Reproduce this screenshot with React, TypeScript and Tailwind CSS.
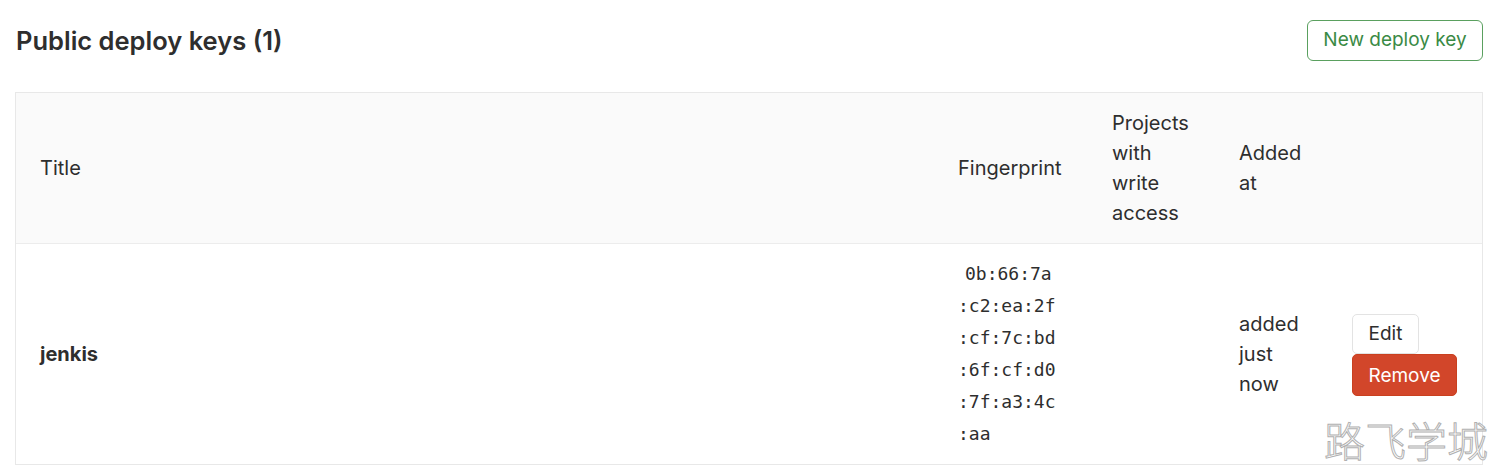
import React from "react";

const fingerprint = ["0b:66:7a", ":c2:ea:2f", ":cf:7c:bd", ":6f:cf:d0", ":7f:a3:4c", ":aa"];

const App = () => {
  return (
    <div className="relative min-h-[470px] bg-white pl-[15px] pr-[17px] pt-5 text-[#2e2e2e] font-['Inter','Liberation_Sans',sans-serif]">
      {/* Heading */}
      <div className="flex items-center justify-between">
        <h3 className="pl-[1px] text-[25.5px] font-semibold leading-[41px] text-[#2e2e2e]">
          Public deploy keys (1)
        </h3>
        <button className="h-[41px] w-[176px] rounded-[6px] border border-[#5aa05f] bg-white text-[19px] text-[#3a8a45]">
          New deploy key
        </button>
      </div>

      {/* Table */}
      <div className="mt-[31px] border border-[#e8e8e8] text-[20px]">
        <div className="grid grid-cols-[918px_154px_127px_112px_155px] items-center border-b border-[#ececec] bg-[#fafafa] leading-[30px]">
          <div className="px-6 py-[15px]">Title</div>
          <div className="px-6 py-[15px]">Fingerprint</div>
          <div className="px-6 py-[15px]">Projects with write access</div>
          <div className="px-6 py-[15px]">Added at</div>
          <div className="px-6 py-[15px]"></div>
        </div>
        <div className="grid grid-cols-[918px_154px_127px_112px_155px] items-center leading-[30px]">
          <div className="px-6 font-bold">jenkis</div>
          <div className="px-6 py-[14px] font-['DejaVu_Sans_Mono',monospace] text-[18px] leading-[32px]">
            {fingerprint.map((line, i) => (
              <div key={line} className={i === 0 ? "pl-[7px]" : ""}>
                {line}
              </div>
            ))}
          </div>
          <div className="px-6"></div>
          <div className="px-6">added just now</div>
          <div className="flex flex-col items-start pl-[25px] pr-6 pt-[1px]">
            <button className="h-[40px] w-[67px] rounded-[5px] border border-[#e3e3e3] bg-white text-[19px] text-[#2e2e2e]">
              Edit
            </button>
            <button className="h-[42px] w-[105px] rounded-[5px] border border-[#c9401f] bg-[#d2462a] pt-[2px] text-[19px] text-white">
              Remove
            </button>
          </div>
        </div>
      </div>

      {/* Watermark */}
      <div className="absolute right-[12px] top-[414px] font-['Noto_Sans_CJK_SC',sans-serif] text-[41px] font-light leading-[50px] text-white [-webkit-text-stroke:1px_#b0b0b0]">
        路飞学城
      </div>
    </div>
  );
};

export default App;
